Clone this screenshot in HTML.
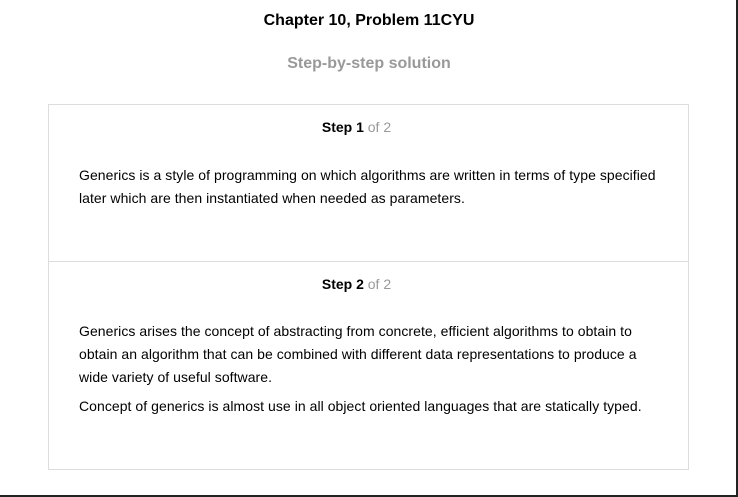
<!DOCTYPE html>
<html><head><style>
body{margin:0;width:738px;height:497px;overflow:hidden;background:#fff;font-family:"Liberation Sans",Arial,sans-serif;}
.frame{position:absolute;left:0;top:0;width:736px;height:495px;border-right:2px solid #222;border-bottom:2px solid #222;}
h1{position:absolute;top:12px;left:0;width:738px;text-align:center;font-size:16px;font-weight:bold;margin:0;color:#000;}
h2{position:absolute;top:55px;left:0;width:738px;text-align:center;font-size:16px;font-weight:bold;margin:0;color:#999;}
.box{position:absolute;left:48px;top:104px;width:639px;height:364px;border:1px solid #ddd;}
.step{position:absolute;left:0;width:639px;}
.lbl{text-align:center;font-size:14px;color:#000;}
.lbl b{font-weight:bold}.lbl span{color:#999}
p{margin:0 0 6px 0;font-size:14px;line-height:23px;color:#000;letter-spacing:0.05px;}
.txt{position:absolute;left:30px;width:582px;}
</style></head><body>
<div class="frame"></div>
<h1>Chapter 10, Problem 11CYU</h1>
<h2>Step-by-step solution</h2>
<div class="box">
<div class="step" style="top:0;height:156px;border-bottom:1px solid #ddd;">
<div class="lbl" style="position:absolute;top:14px;left:-12px;width:639px;"><b>Step 1</b> <span>of 2</span></div>
<div class="txt" style="top:59px"><p>Generics is a style of programming on which algorithms are written in terms of type specified later which are then instantiated when needed as parameters.</p></div>
</div>
<div class="step" style="top:157px;height:207px;">
<div class="lbl" style="position:absolute;top:14px;left:-12px;width:639px;"><b>Step 2</b> <span>of 2</span></div>
<div class="txt" style="top:58px"><p>Generics arises the concept of abstracting from concrete, efficient algorithms to obtain to obtain an algorithm that can be combined with different data representations to produce a wide variety of useful software.</p><p>Concept of generics is almost use in all object oriented languages that are statically typed.</p></div>
</div>
</div>
</body></html>
